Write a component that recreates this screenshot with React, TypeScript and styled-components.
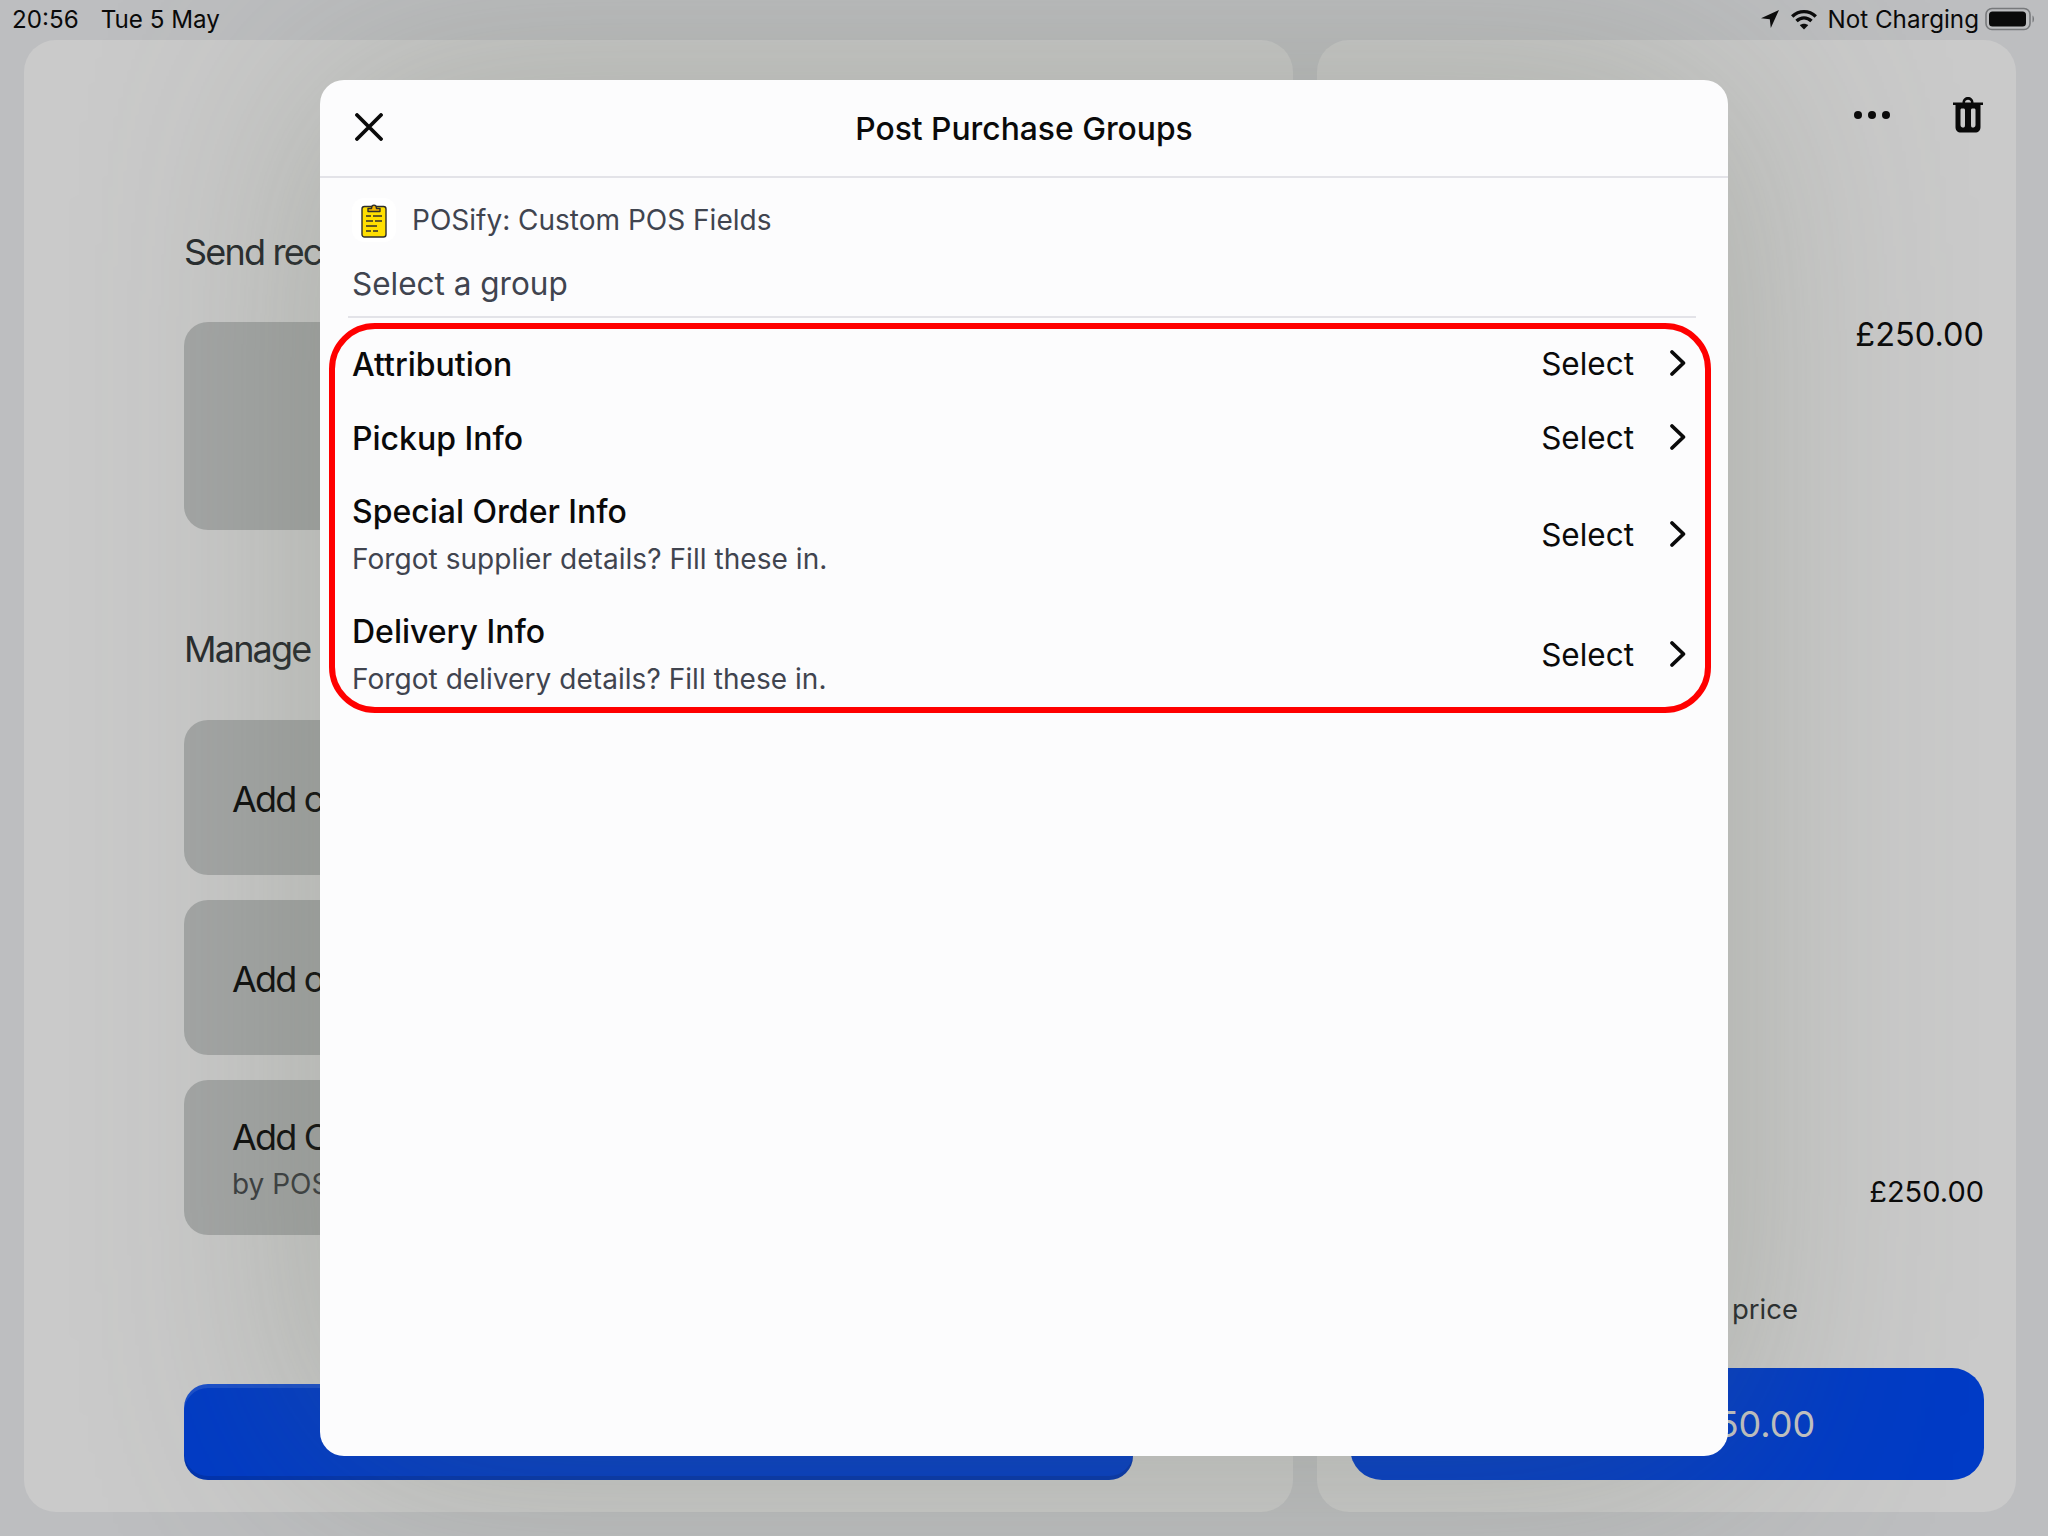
import React from "react";
import styled, { createGlobalStyle } from "styled-components";

const Global = createGlobalStyle`
  html, body { margin: 0; padding: 0; }
  body { font-family: "Inter", "Noto Sans", sans-serif; background: #bdbec0; }
  * { box-sizing: border-box; }
`;

const Page = styled.div`
  position: relative;
  width: 2048px;
  height: 1536px;
  overflow: hidden;
  background: #bdbec0;
  display: flex;
  flex-direction: column;
`;

const StatusBar = styled.div`
  height: 40px;
  padding: 0 13px 2px 12px;
  display: flex;
  align-items: center;
  justify-content: space-between;
  font-size: 24.2px;
  color: #0a0a0a;
`;
const StatusGroup = styled.div<{ $gap: number }>`
  display: flex;
  align-items: center;
  gap: ${(p) => p.$gap}px;
`;

const Main = styled.div`
  flex: 1;
  display: flex;
  gap: 24px;
  padding: 0 32px 24px 24px;
`;

const Panel = styled.section<{ $width: number; $padding: string }>`
  width: ${(p) => p.$width}px;
  padding: ${(p) => p.$padding};
  background: #cacaca;
  border-radius: 32px;
  display: flex;
  flex-direction: column;
`;

const SectionTitle = styled.h2<{ $top: number; $bottom: number }>`
  margin: ${(p) => p.$top}px 0 ${(p) => p.$bottom}px;
  font-size: 36px;
  line-height: 44px;
  font-weight: 400;
  letter-spacing: -1.8px;
  color: #272b2e;
  white-space: nowrap;
`;

const GreyCard = styled.div<{ $height: number }>`
  height: ${(p) => p.$height}px;
  padding: 0 48px;
  background: #a4a6a6;
  border-radius: 24px;
  display: flex;
  flex-direction: column;
  justify-content: center;
  flex-shrink: 0;
  & + & { margin-top: 25px; }
`;
const CardTitle = styled.div`
  font-size: 36px;
  line-height: 44px;
  letter-spacing: -1.8px;
  color: #0c0c0c;
  white-space: nowrap;
  padding-top: 2px;
`;
const CardSub = styled.div`
  margin-top: 6px;
  font-size: 28px;
  line-height: 38px;
  color: #3a3d40;
  white-space: nowrap;
`;

const PayButton = styled.button<{ $height: number; $radius: number; $edge?: boolean; $shift?: number }>`
  margin-top: auto;
  height: ${(p) => p.$height}px;
  padding: 0 0 0 ${(p) => p.$shift ?? 0}px;
  border: 0;
  border-radius: ${(p) => p.$radius}px;
  background: #003bc6;
  color: #c4c4c4;
  font: 400 36px "Inter", sans-serif;
  flex-shrink: 0;
  box-shadow: ${(p) =>
    p.$edge ? "inset 0 4px 0 rgba(255,255,255,.1), inset 0 -4px 0 rgba(0,0,0,.12)" : "none"};
`;

const TopActions = styled.div`
  display: flex;
  justify-content: flex-end;
  align-items: center;
  gap: 62px;
  height: 40px;
  margin-top: 55px;
`;
const Dots = styled.div`
  display: flex;
  gap: 6px;
  & > i { width: 8px; height: 8px; border-radius: 50%; background: #0a0a0a; }
`;
const Amount = styled.div<{ $size: number; $top: number }>`
  margin-top: ${(p) => p.$top}px;
  align-self: flex-end;
  font-size: ${(p) => p.$size}px;
  line-height: 40px;
  color: #0a0a0a;
`;
const Note = styled.div`
  margin-top: 77px;
  padding-left: 382px;
  font-size: 27.5px;
  line-height: 40px;
  color: #272b2e;
  white-space: nowrap;
`;

const Modal = styled.div`
  position: absolute;
  left: 320px;
  top: 80px;
  width: 1408px;
  height: 1376px;
  background: #fcfcfd;
  border-radius: 24px;
  box-shadow: 0 0 240px rgba(95, 105, 85, 0.32);
  display: flex;
  flex-direction: column;
`;
const ModalHeader = styled.header`
  position: relative;
  flex: 0 0 98px;
  display: flex;
  align-items: center;
  justify-content: center;
  border-bottom: 2px solid #e3e3e8;
`;
const CloseIcon = styled.svg`
  position: absolute;
  left: 35px;
  top: 33px;
`;
const ModalTitle = styled.h1`
  margin: 0;
  font-size: 31.8px;
  font-weight: 500;
  color: #0a0a0a;
`;
const AppRow = styled.div`
  margin: 20px 0 0 32px;
  display: flex;
  align-items: center;
  gap: 16px;
  font-size: 28px;
  color: #40444f;
`;
const AppTile = styled.div`
  width: 44px;
  height: 44px;
  border-radius: 12px;
  background: #ffffff;
  display: flex;
  align-items: center;
  justify-content: center;
`;
const GroupLabel = styled.div`
  margin: 20px 32px 0 32px;
  font-size: 31.5px;
  line-height: 44px;
  color: #40444f;
`;
const Rule = styled.div`
  margin: 10px 32px 0 28px;
  height: 2px;
  background: #e3e3e8;
`;
const List = styled.div`
  position: relative;
  margin-top: 9px;
`;
const Highlight = styled.div`
  position: absolute;
  left: 9px;
  right: 17px;
  top: -4px;
  bottom: 2px;
  border: 6px solid #ff0000;
  border-radius: 46px;
  pointer-events: none;
`;
const Row = styled.div<{ $tall?: boolean }>`
  height: ${(p) => (p.$tall ? 120 : 74)}px;
  padding: 0 41px 0 32px;
  display: flex;
  align-items: center;
  justify-content: space-between;
`;
const RowText = styled.div`
  display: flex;
  flex-direction: column;
  gap: 7px;
  padding-top: 1px;
`;
const RowTitle = styled.div`
  font-size: 32px;
  line-height: 40px;
  font-weight: 500;
  color: #0a0a0a;
`;
const RowSub = styled.div`
  font-size: 28px;
  letter-spacing: 0.05px;
  line-height: 40px;
  color: #40444f;
`;
const RowAction = styled.div`
  display: flex;
  align-items: center;
  gap: 35px;
  padding-bottom: 2px;
  font-size: 31.5px;
  color: #0a0a0a;
`;

const Chevron = () => (
  <svg width="18" height="28" viewBox="0 0 18 28" fill="none">
    <path d="M3 3 L14.500 14 L3 25" stroke="#0a0a0a" strokeWidth="3.800" strokeLinecap="round" strokeLinejoin="round" />
  </svg>
);

const Clipboard = () => (
  <svg width="26" height="36" viewBox="0 0 26 36">
    <rect x="1" y="4.500" width="24" height="30.500" rx="2.500" fill="#ffdf00" stroke="#2c2c2c" strokeWidth="1.400" />
    <path d="M7 9.500 V6.500 H10.500 C10.500 2 15.500 2 15.500 6.500 H19 V9.500 Z" fill="#f2b600" stroke="#2c2c2c" strokeWidth="1.400" strokeLinejoin="round" />
    <path d="M5 14h5M12 14h9M5 19h7M14 19h7M5 24h11M5 29h5M12 29h5" stroke="#33302a" strokeWidth="1.400" />
  </svg>
);

const rows = [
  { title: "Attribution" },
  { title: "Pickup Info" },
  { title: "Special Order Info", sub: "Forgot supplier details? Fill these in." },
  { title: "Delivery Info", sub: "Forgot delivery details? Fill these in." },
];

export default function App() {
  return (
    <Page>
      <Global />
      <StatusBar>
        <StatusGroup $gap={22}>
          <span>20:56</span>
          <span>Tue 5 May</span>
        </StatusGroup>
        <StatusGroup $gap={6}>
          <svg width="18" height="18" viewBox="0 0 18 18" style={{ marginRight: 6 }}>
            <path d="M18 0 L0 8.200 L8.800 9.200 L9.800 18 Z" fill="#0a0a0a" />
          </svg>
          <svg width="26" height="21" viewBox="0 0 26 21" fill="none" stroke="#0a0a0a" strokeWidth="3.400" style={{ marginRight: 4 }}>
            <path d="M1.200 7.500 C8 1 18 1 24.800 7.500" />
            <path d="M5.500 12 C10 7.800 16 7.800 20.500 12" />
            <path d="M13 20.500 L8.800 16.200 C11 14.200 15 14.200 17.200 16.200 Z" fill="#0a0a0a" stroke="none" />
          </svg>
          <span>Not Charging</span>
          <svg width="50" height="24" viewBox="0 0 50 24">
            <rect x="1" y="1.500" width="44" height="21" rx="6" fill="none" stroke="#77797b" strokeWidth="1.600" />
            <rect x="4" y="4.500" width="37" height="15" rx="3.500" fill="#0a0a0a" />
            <path d="M47.500 8.500 C49.500 9.500 49.500 14.500 47.500 15.500 Z" fill="#77797b" />
          </svg>
        </StatusGroup>
      </StatusBar>

      <Main>
        <Panel $width={1269} $padding="0 160px 32px">
          <SectionTitle $top={190} $bottom={48}>Send receipt</SectionTitle>
          <GreyCard $height={208} />
          <SectionTitle $top={97} $bottom={49}>Manage</SectionTitle>
          <GreyCard $height={155}>
            <CardTitle>Add customer</CardTitle>
          </GreyCard>
          <GreyCard $height={155}>
            <CardTitle>Add order discount</CardTitle>
          </GreyCard>
          <GreyCard $height={155}>
            <CardTitle>Add Custom Fields</CardTitle>
            <CardSub>by POSify</CardSub>
          </GreyCard>
          <PayButton $height={96} $radius={24} $edge>
            Complete
          </PayButton>
        </Panel>

        <Panel $width={699} $padding="0 32px 32px 33px">
          <TopActions>
            <Dots>
              <i />
              <i />
              <i />
            </Dots>
            <svg width="32" height="38" viewBox="0 0 32 38">
              <path
                fillRule="evenodd"
                fill="#0a0a0a"
                d="M1 6.500 H10.500 C10.500 -1 21.500 -1 21.500 6.500 H31 V9 H28.500 V31 C28.500 34.500 26.500 36.500 23 36.500 H9 C5.500 36.500 3.500 34.500 3.500 31 V9 H1 Z M13 6.500 H19 C19 2.800 13 2.800 13 6.500 Z M10 12.500 C8.800 12.500 8.500 13.200 8.500 14 V29 C8.500 31 10 31.500 11.200 31.500 C12.400 31.500 13 31 13 29 V14 C13 13.200 12.600 12.500 11.200 12.500 Z M19 14 V29 C19 31 19.600 31.500 20.800 31.500 C22 31.500 23.500 31 23.500 29 V14 C23.500 13.200 23.200 12.500 21.800 12.500 H20.800 C19.400 12.500 19 13.200 19 14 Z"
              />
            </svg>
          </TopActions>
          <Amount $size={32.5} $top={180}>£250.00</Amount>
          <Amount $size={29} $top={817}>£250.00</Amount>
          <Note>price</Note>
          <PayButton $height={112} $radius={32} $shift={20}>
            Charge £250.00
          </PayButton>
        </Panel>
      </Main>

      <Modal>
        <ModalHeader>
          <CloseIcon width="28" height="28" viewBox="0 0 28 28" fill="none">
            <path d="M2 2 L26 26 M26 2 L2 26" stroke="#0a0a0a" strokeWidth="3.800" strokeLinecap="round" />
          </CloseIcon>
          <ModalTitle>Post Purchase Groups</ModalTitle>
        </ModalHeader>
        <AppRow>
          <AppTile>
            <Clipboard />
          </AppTile>
          POSify: Custom POS Fields
        </AppRow>
        <GroupLabel>Select a group</GroupLabel>
        <Rule />
        <List>
          <Highlight />
          {rows.map((r) => (
            <Row key={r.title} $tall={!!r.sub}>
              <RowText>
                <RowTitle>{r.title}</RowTitle>
                {r.sub && <RowSub>{r.sub}</RowSub>}
              </RowText>
              <RowAction>
                Select
                <Chevron />
              </RowAction>
            </Row>
          ))}
        </List>
      </Modal>
    </Page>
  );
}
